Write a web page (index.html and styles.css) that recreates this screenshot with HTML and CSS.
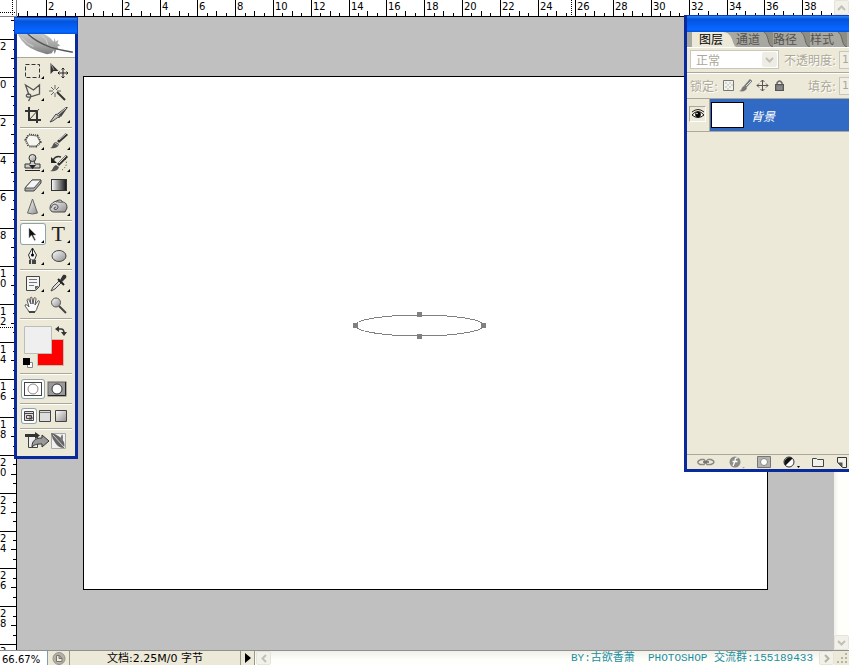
FILE: index.html
```html
<!DOCTYPE html>
<html lang="zh-CN">
<head>
  <meta charset="UTF-8" />
  <meta name="viewport" content="width=device-width, initial-scale=1.0"/>
  <title>Photoshop</title>
  <link rel="stylesheet" href="styles.css">
</head>
<body>

<div class="app">

  <!-- Rulers -->
  <div class="corner">
    <svg width="17" height="17" shape-rendering="crispEdges"><path d="M12.5 0v16M0 12.5h16" stroke="#000" stroke-dasharray="1 1"/><path d="M16.5 0v17M0 16.5h17" stroke="#808080"/></svg>
  </div>
  <svg class="ruler ruler-top" id="rulerTop"></svg>
  <svg class="ruler ruler-left" id="rulerLeft"></svg>

  <!-- Document -->
  <main class="workspace">
    <div class="document">
      <svg class="vector-path" width="136" height="30" shape-rendering="crispEdges">
        <ellipse cx="67.5" cy="14.5" rx="64.5" ry="10.5" fill="none" stroke="#808080"/>
        <path d="M1 12h5v5H1zM65 1h5v5h-5zM129 12h5v5h-5zM65 23h5v5h-5z" fill="#808080"/>
      </svg>
    </div>
  </main>

  <div class="scroll-y">
    <button class="scroll-btn" aria-label="向上"><svg width="9" height="6"><path d="M1 5l3.500-3.500L8 5" fill="none" stroke="#c2c0b4" stroke-width="2"/></svg></button>
    <button class="scroll-btn" aria-label="向下"><svg width="9" height="6"><path d="M1 1l3.500 3.500L8 1" fill="none" stroke="#c2c0b4" stroke-width="2"/></svg></button>
  </div>

  <!-- Status bar -->
  <footer class="status">
    <input class="zoom" type="text" value="66.67%" aria-label="缩放">
    <button class="status-btn version" aria-label="Version Cue"><svg width="14" height="13"><circle cx="7" cy="6.500" r="6" fill="#b4b2a8" stroke="#96948a"/><path d="M4.500 9.500v-6h3l2.500 3v3zM7 3.500v3h3" fill="#efede2" stroke="#77756c"/></svg></button>
    <span class="doc-size">文档:2.25M/0 字节</span>
    <button class="status-btn arrow" aria-label="显示"><svg width="6" height="10"><path d="M0 0l6 5-6 5z"/></svg></button>
    <div class="scroll-x">
      <button class="scroll-btn" aria-label="向左"><svg width="6" height="9"><path d="M5 1L1.500 4.500 5 8" fill="none" stroke="#c2c0b4" stroke-width="2"/></svg></button>
      <span class="credit">BY:古欲香萧  PHOTOSHOP 交流群:155189433</span>
      <button class="scroll-btn" aria-label="向右"><svg width="6" height="9"><path d="M1 1l3.500 3.500L1 8" fill="none" stroke="#b4b2a4" stroke-width="2"/></svg></button>
    </div>
    <svg class="grip" width="15" height="14"><path d="M11 2h2v2h-2zM7 6h2v2H7zM11 6h2v2h-2zM3 10h2v2H3zM7 10h2v2H7zM11 10h2v2h-2z" fill="#b8b4a2"/></svg>
  </footer>

  <!-- Toolbox -->
  <aside class="window toolbox">
    <div class="titlebar"></div>
    <svg class="feather" width="58" height="24" viewBox="0 0 58 24">
      <defs>
        <linearGradient id="plume" x1="0" y1="0" x2="0" y2="1"><stop offset="0" stop-color="#c4c4c4"/><stop offset=".6" stop-color="#a2a2a2"/><stop offset="1" stop-color="#7c7c7c"/></linearGradient>
        <linearGradient id="metal" x1="0" y1="0" x2="1" y2="1"><stop offset="0" stop-color="#fff"/><stop offset="1" stop-color="#8d8d8d"/></linearGradient>
        <linearGradient id="fade"><stop offset="0" stop-color="#fff"/><stop offset="1" stop-color="#111"/></linearGradient>
      </defs>
      <path d="M0 1Q6 13 20 18l10 3 5-1 2-3 1 4 2-5 2 1-1-4 3-1-3-2 1-4-3 2-1-4-1 4-2-2Q33 3 27 0H0z" fill="url(#plume)"/>
      <path d="M13 1q3 1 2 3M24 1q6 4 7 10M4 4q6 7 12 9" stroke="#d4d4d4" fill="none"/>
      <path d="M10 0q10 9 24 14 10 3 23 5" fill="none" stroke="#555" stroke-width="1.500"/>
    </svg>

    <div class="tools first">
      <button aria-label="矩形选框"><svg width="26" height="22"><rect x="5.500" y="4.500" width="14" height="13" fill="none" stroke="#333" stroke-dasharray="4 2"/><path class="more" d="M24 16v3h-3z"/></svg></button>
      <button aria-label="移动"><svg width="26" height="22"><path d="M4.500 3v11l3-3 5 0z" fill="#333"/><path d="M5 4l3 6" stroke="#999"/><path d="M17 8v10M12 13h10M15.500 9.500L17 8l1.500 1.500M15.500 16.500L17 18l1.500-1.500M13.500 11.500L12 13l1.500 1.500M20.500 11.500L22 13l-1.500 1.500" fill="none" stroke="#222"/></svg></button>
      <button aria-label="多边形套索"><svg width="26" height="22"><path d="M9 13L5.500 3l8 5 6-5v9l-10 3c-4 1-4-3-1-3s3 3 0 7" fill="none" stroke="#555" stroke-width="1.300"/><path class="more" d="M24 16v3h-3z"/></svg></button>
      <button aria-label="魔棒"><svg width="26" height="22"><path d="M11 10l8 8" stroke="#333" stroke-width="2"/><path d="M9 3v4M9 11v4M3 9h4M11 9h4M5 5l3 3M13 5l-3 3M5 13l3-3" stroke="#666"/></svg></button>
      <button aria-label="裁剪"><svg width="26" height="22"><path d="M9 3v13h12M5 7h12v12" fill="none" stroke="#333" stroke-width="2"/><path d="M10 15l9-10" stroke="#444"/></svg></button>
      <button aria-label="切片"><svg width="26" height="22"><path d="M4 18l6-8 4 3c-4 0-5 4-10 5z" fill="url(#metal)" stroke="#444"/><path d="M11 10l9-7 2 0-7 10z" fill="#444"/><path d="M12 11l8-7" stroke="#ddd"/><path class="more" d="M24 16v3h-3z"/></svg></button>
    </div>

    <div class="tools">
      <button aria-label="修补"><svg width="26" height="22"><path d="M9 5l8 1 3 6-4 4-7 0-3-6z" fill="#f6f6ef" stroke="#333" stroke-width="3" stroke-dasharray="1 1"/><path d="M9 5l8 1 3 6-4 4-7 0-3-6z" fill="#f6f6ef" stroke="#777"/><path class="more" d="M24 17v3h-3z"/></svg></button>
      <button aria-label="画笔"><svg width="26" height="22"><path d="M12 12l9-8" stroke="#333" stroke-width="3"/><path d="M13 10l8-7" stroke="#ddd"/><path d="M4 18c3 0 2-5 6-6l3 2c-1 4-5 5-9 4z" fill="#555"/><path d="M9 13l3 2" stroke="#ccc"/><path class="more" d="M24 17v3h-3z"/></svg></button>
      <button aria-label="仿制图章"><svg width="26" height="22"><path d="M11 8h3l1 4h5v4H5v-4h5z" fill="#ccc" stroke="#333"/><circle cx="12.500" cy="6" r="3.500" fill="url(#metal)" stroke="#333"/><path d="M9 13h7l-3.500 4zM5 18h15v1H5z" fill="#222"/><path class="more" d="M24 17v3h-3z"/></svg></button>
      <button aria-label="历史记录画笔"><svg width="26" height="22"><path d="M12 13l9-9" stroke="#333" stroke-width="3"/><path d="M13 11l7-7" stroke="#ddd"/><path d="M4 19c3 0 2-4 6-6l3 2c-1 4-5 5-9 4z" fill="#555"/><path d="M5 5v6h6z" fill="#222"/><path d="M7 8q3-5 8-3" fill="none" stroke="#333" stroke-width="1.500"/><path d="M19 7q4 6-3 11" fill="none" stroke="#222" stroke-dasharray="1 2"/><path class="more" d="M24 17v3h-3z"/></svg></button>
      <button aria-label="橡皮擦"><svg width="26" height="22"><path d="M5 14l7-8h9v3l-7 8H5z" fill="#aaa" stroke="#444"/><path d="M5 14l7-8h9l-7 8z" fill="#f5f5f5" stroke="#555"/><path class="more" d="M24 17v3h-3z"/></svg></button>
      <button aria-label="渐变"><svg width="26" height="22"><rect x="5.500" y="5.500" width="15" height="11" fill="url(#fade)" stroke="#333"/><path class="more" d="M24 17v3h-3z"/></svg></button>
      <button aria-label="锐化"><svg width="26" height="22"><path d="M12.500 3l5 14q-5 2-10 0z" fill="url(#metal)" stroke="#666"/><path class="more" d="M24 17v3h-3z"/></svg></button>
      <button aria-label="海绵"><svg width="26" height="22"><path d="M4 12c0-3 2-5 4-6l5-2c3 0 3 1 3 2 4 0 5 3 5 6l-2 4H8c-3 0-4-2-4-4z" fill="url(#metal)" stroke="#444"/><path d="M5 12q1-4 4-4 4 1 3 4-2 3-4 1 0-2 2-2M10 6c2-1 4 1 6 0" fill="none" stroke="#555"/><path class="more" d="M24 17v3h-3z"/></svg></button>
    </div>

    <div class="tools">
      <button class="active" aria-label="路径选择"><svg width="26" height="22"><path d="M9 5v10l2.500-3 3 5.500 1-.5-2.500-5h3z" fill="#111" stroke="#999" stroke-width=".5"/><path class="more" d="M24 17v3h-3z"/></svg></button>
      <button class="type-tool" aria-label="文字"><span>T</span><svg width="4" height="22"><path class="more" d="M3 17v3H0z"/></svg></button>
      <button aria-label="钢笔"><svg width="26" height="22"><path d="M12.500 3l4 7-2 5h-4l-2-5z" fill="#f5f5f5" stroke="#333"/><path d="M12.500 3v6" stroke="#222"/><circle cx="12.500" cy="10" r="1.500"/><path d="M9 15h7v4H9z" fill="#444"/><path d="M11.500 15v4" stroke="#ddd"/><path class="more" d="M24 17v3h-3z"/></svg></button>
      <button aria-label="椭圆"><svg width="26" height="22"><ellipse cx="13" cy="11" rx="7" ry="5.500" fill="url(#metal)" stroke="#444"/><path class="more" d="M24 17v3h-3z"/></svg></button>
    </div>

    <div class="tools">
      <button aria-label="注释"><svg width="26" height="22"><path d="M6.500 4.500h13v10l-4 4h-9z" fill="#f5f5f5" stroke="#444"/><path d="M9 7.500h8M9 10.500h8M9 13.500h5" stroke="#777"/><path d="M15 18v-4h4z" fill="#666"/><path class="more" d="M24 17v3h-3z"/></svg></button>
      <button aria-label="吸管"><svg width="26" height="22"><path d="M5 19l2-4 6-6 2 2-6 6z" fill="#ddd" stroke="#444"/><path d="M12 7l6 6" stroke="#222" stroke-width="2"/><path d="M14 8l3-5c3-1 4 1 3 3l-4 4z" fill="#333"/><path class="more" d="M24 17v3h-3z"/></svg></button>
      <button aria-label="抓手"><svg width="26" height="22"><path d="M9 18c-1-3-4-5-4-7 2-1 3 1 4 2L7 6c1-2 2-1 2 0l2 4-1-6c1-1 2-1 2 0l1 6 1-6c1-1 2 0 2 1l-1 6 3-4c1-1 2 0 1 2l-2 5c0 2-2 3-2 4z" fill="#fbfbfb" stroke="#555"/><path d="M9 18h6" stroke="#444" stroke-width="2"/></svg></button>
      <button aria-label="缩放工具"><svg width="26" height="22"><path d="M13 12l7 7" stroke="#444" stroke-width="2"/><circle cx="10" cy="8.500" r="4.500" fill="url(#metal)" stroke="#555"/></svg></button>
    </div>

    <div class="colors">
      <svg width="52" height="51" viewBox="0 0 52 51">
        <path d="M17.500 18.500h26v26h-26z" fill="red" stroke="#c9bfb0"/>
        <path d="M4.500 5.500h27v27h-27z" fill="#efefef" stroke="#bdbdb8"/>
        <path d="M35 8l4-3v6zM41 11h6l-3 4z" fill="#333"/><path d="M38 8h3q3 0 3 4" fill="none" stroke="#333" stroke-width="1.500"/>
        <path d="M7.500 41.500h5v5h-5z" fill="#fff" stroke="#888"/><path d="M3 37h7v7H3z" fill="#000"/>
      </svg>
    </div>

    <div class="modes mask-modes">
      <button class="active" aria-label="标准模式"><svg width="20" height="16"><rect x="1.500" y="1.500" width="17" height="13" fill="#fff" stroke="#444"/><circle cx="10" cy="8" r="5" fill="#fff" stroke="#888"/></svg></button>
      <button aria-label="快速蒙版模式"><svg width="20" height="16"><rect x="1" y="1" width="18" height="14" fill="#999" stroke="#666"/><path d="M18.500 1v13.500H1" fill="none" stroke="#222"/><circle cx="10" cy="8" r="5" fill="#fff" stroke="#333"/></svg></button>
    </div>

    <div class="modes screen-modes">
      <button class="active" aria-label="标准屏幕"><svg width="12" height="12"><path d="M1.500 1.500h9v9h-9z" fill="#ddd" stroke="#444"/><path d="M1 3.500h10M3.500 5.500h5v3h-5zM6 7h3v2H6" fill="none" stroke="#444"/></svg></button>
      <button aria-label="带菜单栏全屏"><svg width="12" height="12"><path d="M.5 .5h11v11H.5z" fill="#ddd" stroke="#444"/><path d="M1 2.500h10" stroke="#777"/></svg></button>
      <button aria-label="全屏"><svg width="12" height="12"><path d="M.5 .5h11v11H.5z" fill="url(#metal)" stroke="#444"/></svg></button>
    </div>

    <div class="jump">
      <button aria-label="转到 ImageReady"><svg width="46" height="20" viewBox="0 0 46 20">
        <path d="M5.500 3.500h9v13h-9z" fill="#eee" stroke="#444"/><path d="M2 3h10V1l5 3.500L12 8V6H2z" fill="#333"/><path d="M9 16c0-6 3-9 10-9V4l7 6-7 6v-3c-4 0-7 0-10 3z" fill="#999" stroke="#333"/>
        <path d="M28.500 2.500h14v15h-14z" fill="#f1f1f1" stroke="#aaa"/><path d="M28 2q9 2 13 9 1 3 0 6-5 0-8-4-4-5-5-11z" fill="#666"/><path d="M39 3q2 3 0 8l-2-3z" fill="#777"/><path d="M30 4l11 12" stroke="#ccc"/></svg></button>
    </div>
  </aside>

  <!-- Layers panel -->
  <aside class="window panel">
    <div class="titlebar"></div>
    <div class="tabs">
      <button class="tab active">图层<svg width="13" height="15"><path d="M0 0q6 0 9 7 2 7 4 8H0z" fill="#ece9d8"/></svg></button>
      <button class="tab">通道<svg width="13" height="15"><path d="M4 0q3 2 4 7 1 7 5 8V0z" fill="#8e8d85"/><path d="M4 0q3 2 4 7 1 7 5 8" fill="none" stroke="#66655f"/></svg></button>
      <button class="tab">路径<svg width="13" height="15"><path d="M4 0q3 2 4 7 1 7 5 8V0z" fill="#8e8d85"/><path d="M4 0q3 2 4 7 1 7 5 8" fill="none" stroke="#66655f"/></svg></button>
      <button class="tab">样式<svg width="13" height="15"><path d="M4 0q3 2 4 7 1 7 5 8V0z" fill="#8e8d85"/><path d="M4 0q3 2 4 7 1 7 5 8" fill="none" stroke="#66655f"/></svg></button>
    </div>
    <div class="options">
      <div class="blend">
        <select aria-label="混合模式" disabled><option>正常</option></select>
        <span class="drop"><svg width="9" height="6"><path d="M1 1l3.500 3.500L8 1" fill="none" stroke="#c2c0b4" stroke-width="2"/></svg></span>
      </div>
      <label for="opacity">不透明度:</label>
      <input id="opacity" type="text" value="100%" disabled>
    </div>
    <div class="options">
      <span class="lock-label">锁定:</span>
      <div class="locks">
        <svg width="13" height="13"><path d="M1.500 1.500h10v10h-10z" fill="#f4f4ee" stroke="#777"/><path d="M3 3h2v2H3zM7 3h2v2H7zM5 5h2v2H5zM9 5h2v2H9zM3 7h2v2H3zM7 7h2v2H7zM5 9h2v2H5z" fill="#d6d6d1"/></svg>
        <svg width="13" height="13"><path d="M6 8l6-7" stroke="#777" stroke-width="3"/><path d="M7 7l5-5" stroke="#ddd"/><path d="M0 12c3 0 2-4 5-5l3 2c-1 3-4 4-8 3z" fill="#777"/></svg>
        <svg width="13" height="13"><path d="M6.500 1v11M1 6.500h11M4.500 3l2-2 2 2M4.500 10l2 2 2-2M3 4.500l-2 2 2 2M10 4.500l2 2-2 2" fill="none" stroke="#555"/></svg>
        <svg width="13" height="13"><path d="M4 6V4q2.500-4 5 0v2" fill="none" stroke="#666" stroke-width="1.500"/><rect x="2.500" y="5.500" width="8" height="6" fill="#777" stroke="#555"/><path d="M4 8h5M4 10h5" stroke="#999"/></svg>
      </div>
      <label for="fill">填充:</label>
      <input id="fill" type="text" value="100%" disabled>
    </div>
    <div class="layer">
      <button class="eye" aria-label="可见性"><svg width="14" height="12"><path d="M1 7q6-7 12 0-6 5-12 0z" fill="#fff" stroke="#111"/><circle cx="7" cy="6.500" r="2.800"/><path d="M1 4q6-5 12 0" fill="none" stroke="#222"/><circle cx="6" cy="5.500" r=".8" fill="#fff"/></svg></button>
      <div class="layer-row">
        <span class="thumb"></span>
        <span class="layer-name">背景</span>
      </div>
    </div>
    <div class="layer-list"></div>
    <div class="panel-footer">
      <button aria-label="链接"><svg width="20" height="12"><path d="M5 3.500h3q2.500 2.500 0 5H4q-5-2.500 1-5zM12 3.500h3q6 2.500 0 5h-4q-2.500-2.500 1-5z" fill="none" stroke="#8a8a82" stroke-width="1.500"/><path d="M7 6h6" stroke="#666" stroke-width="1.500"/></svg></button>
      <button aria-label="图层样式"><svg width="18" height="13"><circle cx="7" cy="6" r="5.500" fill="#8c8c84"/><path d="M10 2q-3-1-3 3L5 10M4.500 5.500h5" fill="none" stroke="#fff" stroke-width="1.300"/><path d="M14 11h3l-1.500 1.500z" fill="#aaa"/></svg></button>
      <button aria-label="图层蒙版"><svg width="14" height="12"><path d="M.5 .5h13v11H.5z" fill="#b3b3ab" stroke="#777"/><circle cx="7" cy="6" r="3.500" fill="#fff" stroke="#888"/></svg></button>
      <button aria-label="调整图层"><svg width="18" height="13"><circle cx="6" cy="6" r="5" fill="#fff" stroke="#333"/><path d="M9.500 2.500l-7 7A5 5 0 0 1 9.500 2.500z" fill="#111"/><path d="M14 10h3l-1.500 2z"/></svg></button>
      <button aria-label="新组"><svg width="12" height="12"><path d="M.5 2.500h4l1 1h6v7H.5z" fill="#f1f1ea" stroke="#444"/></svg></button>
      <button aria-label="新图层"><svg width="12" height="12"><path d="M1.500 1.500h9v10h-4l-5-5z" fill="#f1f1ea" stroke="#333"/><path d="M1.500 6.500h5v5z" fill="#555"/></svg></button>
    </div>
  </aside>
</div>

<script src="script.js"></script>
</body>
</html>
```
FILE: styles.css
```css
* {
  box-sizing: border-box;
}
body {
  margin: 0;
  font-family: "DejaVu Sans", "Noto Sans CJK SC", sans-serif;
  font-size: 11px;
  color: #000;
}
button {
  margin: 0;
  padding: 0;
  border: 0;
  background: none;
  font: inherit;
  color: inherit;
}
svg {
  display: block;
  flex: none;
}
.app {
  position: relative;
  display: grid;
  grid-template-columns: 17px 1fr 15px;
  grid-template-rows: 17px 1fr 15px;
  height: 100vh;
  overflow: hidden;
  background: #fff;
}

/* rulers */
.corner {
  grid-area: 1 / 1;
}
.ruler {
  width: 100%;
  height: 100%;
  overflow: hidden;
  font-size: 10px;
}
.ruler path {
  fill: none;
  stroke: #000;
  shape-rendering: crispEdges;
}
.ruler .guide {
  stroke-dasharray: 1 1;
}
.ruler-top {
  grid-area: 1 / 2;
}
.ruler-left {
  grid-area: 2 / 1;
}

/* document */
.workspace {
  grid-area: 2 / 2;
  display: flex;
  padding: 59px 66px 60px;
  background: #c0c0c0;
}
.document {
  position: relative;
  flex: 1;
  border: 1px solid #000;
  background: #fff;
}
.vector-path {
  position: absolute;
  left: 268px;
  top: 234px;
}

/* scrollbars */
.scroll-y {
  grid-area: 1 / 3 / 3 / 4;
  display: flex;
  flex-direction: column;
  justify-content: space-between;
  background: linear-gradient(to right, #f0efe8, #fefefb 30%);
}
.scroll-btn {
  display: flex;
  flex: none;
  align-items: center;
  justify-content: center;
  width: 15px;
  height: 15px;
  border: 1px solid #e6e4d8;
  border-radius: 2px;
  background: #f2f1e9;
}

/* status bar */
.status {
  grid-area: 3 / 1 / 4 / 4;
  display: flex;
  border-top: 1px solid #8e8f8f;
  background: #ece9d8;
  line-height: 15px;
}
.zoom {
  width: 48px;
  padding: 2px 0 0 2px;
  border: 0;
  border-right: 1px solid #7f9db9;
  background: #fff;
  font: 10px "DejaVu Sans", sans-serif;
}
.status-btn {
  display: flex;
  align-items: center;
  justify-content: center;
  border-right: 1px solid #99978c;
}
.version {
  width: 22px;
}
.doc-size {
  width: 171px;
  border-right: 1px solid #99978c;
  text-align: center;
  white-space: nowrap;
}
.arrow {
  width: 14px;
}
.scroll-x {
  display: flex;
  flex: 1;
  justify-content: space-between;
  padding-left: 1px;
  background: linear-gradient(#f0efe8, #fefefb 60%);
}
.scroll-x .scroll-btn {
  height: 14px;
}
.credit {
  margin-left: auto;
  padding-right: 6px;
  font-family: "Liberation Mono", "Noto Sans CJK SC", monospace;
  color: #1a8f9f;
  white-space: pre;
}

/* floating windows */
.window {
  position: absolute;
  display: flex;
  flex-direction: column;
  border: 3px solid #0a2a9c;
  border-top: 0;
  background: #ece9d8;
}
.titlebar {
  flex: none;
  height: 17px;
  margin: 0 -3px;
  border: 1px solid #0a40c8;
  border-bottom: 0;
  background: linear-gradient(#2f86f5, #0453dc 20%, #0560f5 60%, #0668ff 85%, #0450d8);
}

/* toolbox */
.toolbox {
  left: 14px;
  top: 17px;
  width: 64px;
}
.feather {
  width: 100%;
  border-bottom: 1px solid #aca899;
  background: #fff;
}
.tools,
.colors,
.modes,
.jump {
  margin: 0 3px;
  border-top: 1px solid #aca899;
  box-shadow: inset 0 1px 0 #fff;
}
.tools {
  display: grid;
  grid-template-columns: 1fr 1fr;
  grid-auto-rows: 22px;
  padding: 2px 0;
}
.tools.first {
  padding-bottom: 1px;
  border-top: 0;
  box-shadow: none;
}
.tools button {
  display: flex;
}
.tools .active,
.modes .active {
  border-radius: 3px;
  background: #fff;
  box-shadow: inset 0 0 0 1px #8fa3ad;
}
.more {
  fill: #000;
}
.type-tool {
  justify-content: flex-end;
  font: 22px/22px "Liberation Serif", serif;
  color: #222;
}
.type-tool span {
  padding-right: 2px;
}
.type-tool svg {
  margin-right: 1px;
}
.colors {
  padding: 2px 0 1px;
}
.modes {
  display: flex;
  align-items: center;
  padding: 0 1px;
}
.modes button {
  display: flex;
  align-items: center;
  justify-content: center;
}
.mask-modes {
  height: 30px;
}
.mask-modes button {
  width: 24px;
  height: 20px;
}
.screen-modes {
  height: 25px;
}
.screen-modes button {
  width: 16px;
  height: 16px;
}
.jump {
  padding: 2px 3px;
}

/* layers panel */
.panel {
  left: 684px;
  top: 15px;
  right: 0;
  height: 457px;
  border-right: 0;
  overflow: hidden;
  color: #aca899;
}
.panel .titlebar {
  margin-right: 0;
  border-right: 0;
}
.tabs {
  display: flex;
  flex: none;
  height: 15px;
  padding-left: 5px;
  background: #a9a8a0;
}
.tab {
  display: flex;
  flex: none;
  font-size: 12px;
  line-height: 17px;
  color: #55544f;
}
.tab.active {
  padding-left: 7px;
  background: linear-gradient(to right, #ece9d8 31px, transparent 31px);
  color: #000;
}
.options {
  display: flex;
  flex: none;
  align-items: center;
  height: 26px;
  padding-left: 3px;
  border-bottom: 1px solid #aca899;
  box-shadow: inset 0 1px 0 #fff;
  font-size: 12px;
  white-space: nowrap;
  text-shadow: 1px 1px 0 #fff;
}
.options label {
  margin-left: auto;
  padding-right: 3px;
}
.options input {
  flex: none;
  width: 44px;
  height: 18px;
  margin-right: -34px;
  padding: 0 2px;
  border: 1px solid #c9c7ba;
  background: #f1efe4;
  font: 11px "DejaVu Sans", sans-serif;
  color: #aca899;
}
.blend {
  display: flex;
  width: 89px;
  height: 19px;
  padding: 1px;
  border: 1px solid #c9c7ba;
  background: #fff;
}
.blend select {
  flex: 1;
  min-width: 0;
  padding: 0 4px;
  border: 0;
  background: #fff;
  appearance: none;
  font: 12px "Noto Sans CJK SC", sans-serif;
  line-height: 15px;
  color: #aca899;
  opacity: 1;
}
.drop {
  display: flex;
  align-items: center;
  justify-content: center;
  width: 15px;
  border-radius: 2px;
  background: #eeede5;
}
.locks {
  display: flex;
  gap: 4px;
  padding-left: 4px;
}
.layer {
  display: flex;
  flex: none;
  height: 33px;
  border-bottom: 1px solid #aca899;
}
.eye {
  display: flex;
  align-items: center;
  justify-content: center;
  width: 17px;
  height: 16px;
  margin: 7px 3px 0 2px;
  border: 1px solid #aca899;
  border-right-color: #fff;
  border-bottom-color: #fff;
}
.layer-row {
  display: flex;
  flex: 1;
  align-items: center;
  gap: 7px;
  padding-left: 1px;
  border-left: 1px solid #aca899;
  background: #316ac5;
  color: #fff;
}
.thumb {
  width: 33px;
  height: 26px;
  border: 1px solid #000;
  background: #fff;
}
.layer-name {
  font-size: 12px;
  font-style: italic;
}
.layer-list {
  flex: 1;
}
.panel-footer {
  display: flex;
  flex: none;
  align-items: center;
  justify-content: space-between;
  height: 15px;
  padding: 0 1px 0 9px;
  border-top: 1px solid #aca899;
}
```
FILE: script.js
```javascript
// One ruler unit is 18.9px at 66.67%, labels sit on every second unit
const STEP = 37.8;

function drawRuler(svg, vertical, origin, guide) {
  const length = vertical ? svg.clientHeight : svg.clientWidth;
  let ticks = "", html = "";

  const line = (p, size) => vertical
    ? `M${16 - size} ${p}.5h${size}`
    : `M${p}.5 ${16 - size}v${size}`;

  for (let n = Math.floor(-origin / STEP); origin + n * STEP < length; n++) {
    const start = origin + n * STEP;
    const tick = Math.round(start);
    ticks += line(tick, 16);
    ticks += line(Math.round(start + STEP / 4), 3);
    ticks += line(Math.round(start + STEP / 2), 5);
    ticks += line(Math.round(start + STEP * 3 / 4), 3);

    const label = String(Math.abs(n * 2));
    if (vertical && tick >= 0) {
      [...label].forEach((d, i) => {
        const y = tick + 11 + i * 10;
        if (y - 8 < length) html += `<text x="0" y="${y}">${d}</text>`;
      });
    } else if (!vertical && tick >= 0) {
      html += `<text x="${tick + 2}" y="10">${label}</text>`;
    }
  }

  const edge = vertical ? `M16.5 0v${length}` : `M0 16.5h${length}`;
  html += `<path d="${ticks}${edge}"/>`;
  html += `<path class="guide" d="${line(guide, 16)}"/>`;
  svg.innerHTML = html;
}

function drawRulers() {
  drawRuler(document.getElementById("rulerTop"), false, 67, 554);
  drawRuler(document.getElementById("rulerLeft"), true, 60, 310);
}

window.addEventListener("resize", drawRulers);
drawRulers();
```
